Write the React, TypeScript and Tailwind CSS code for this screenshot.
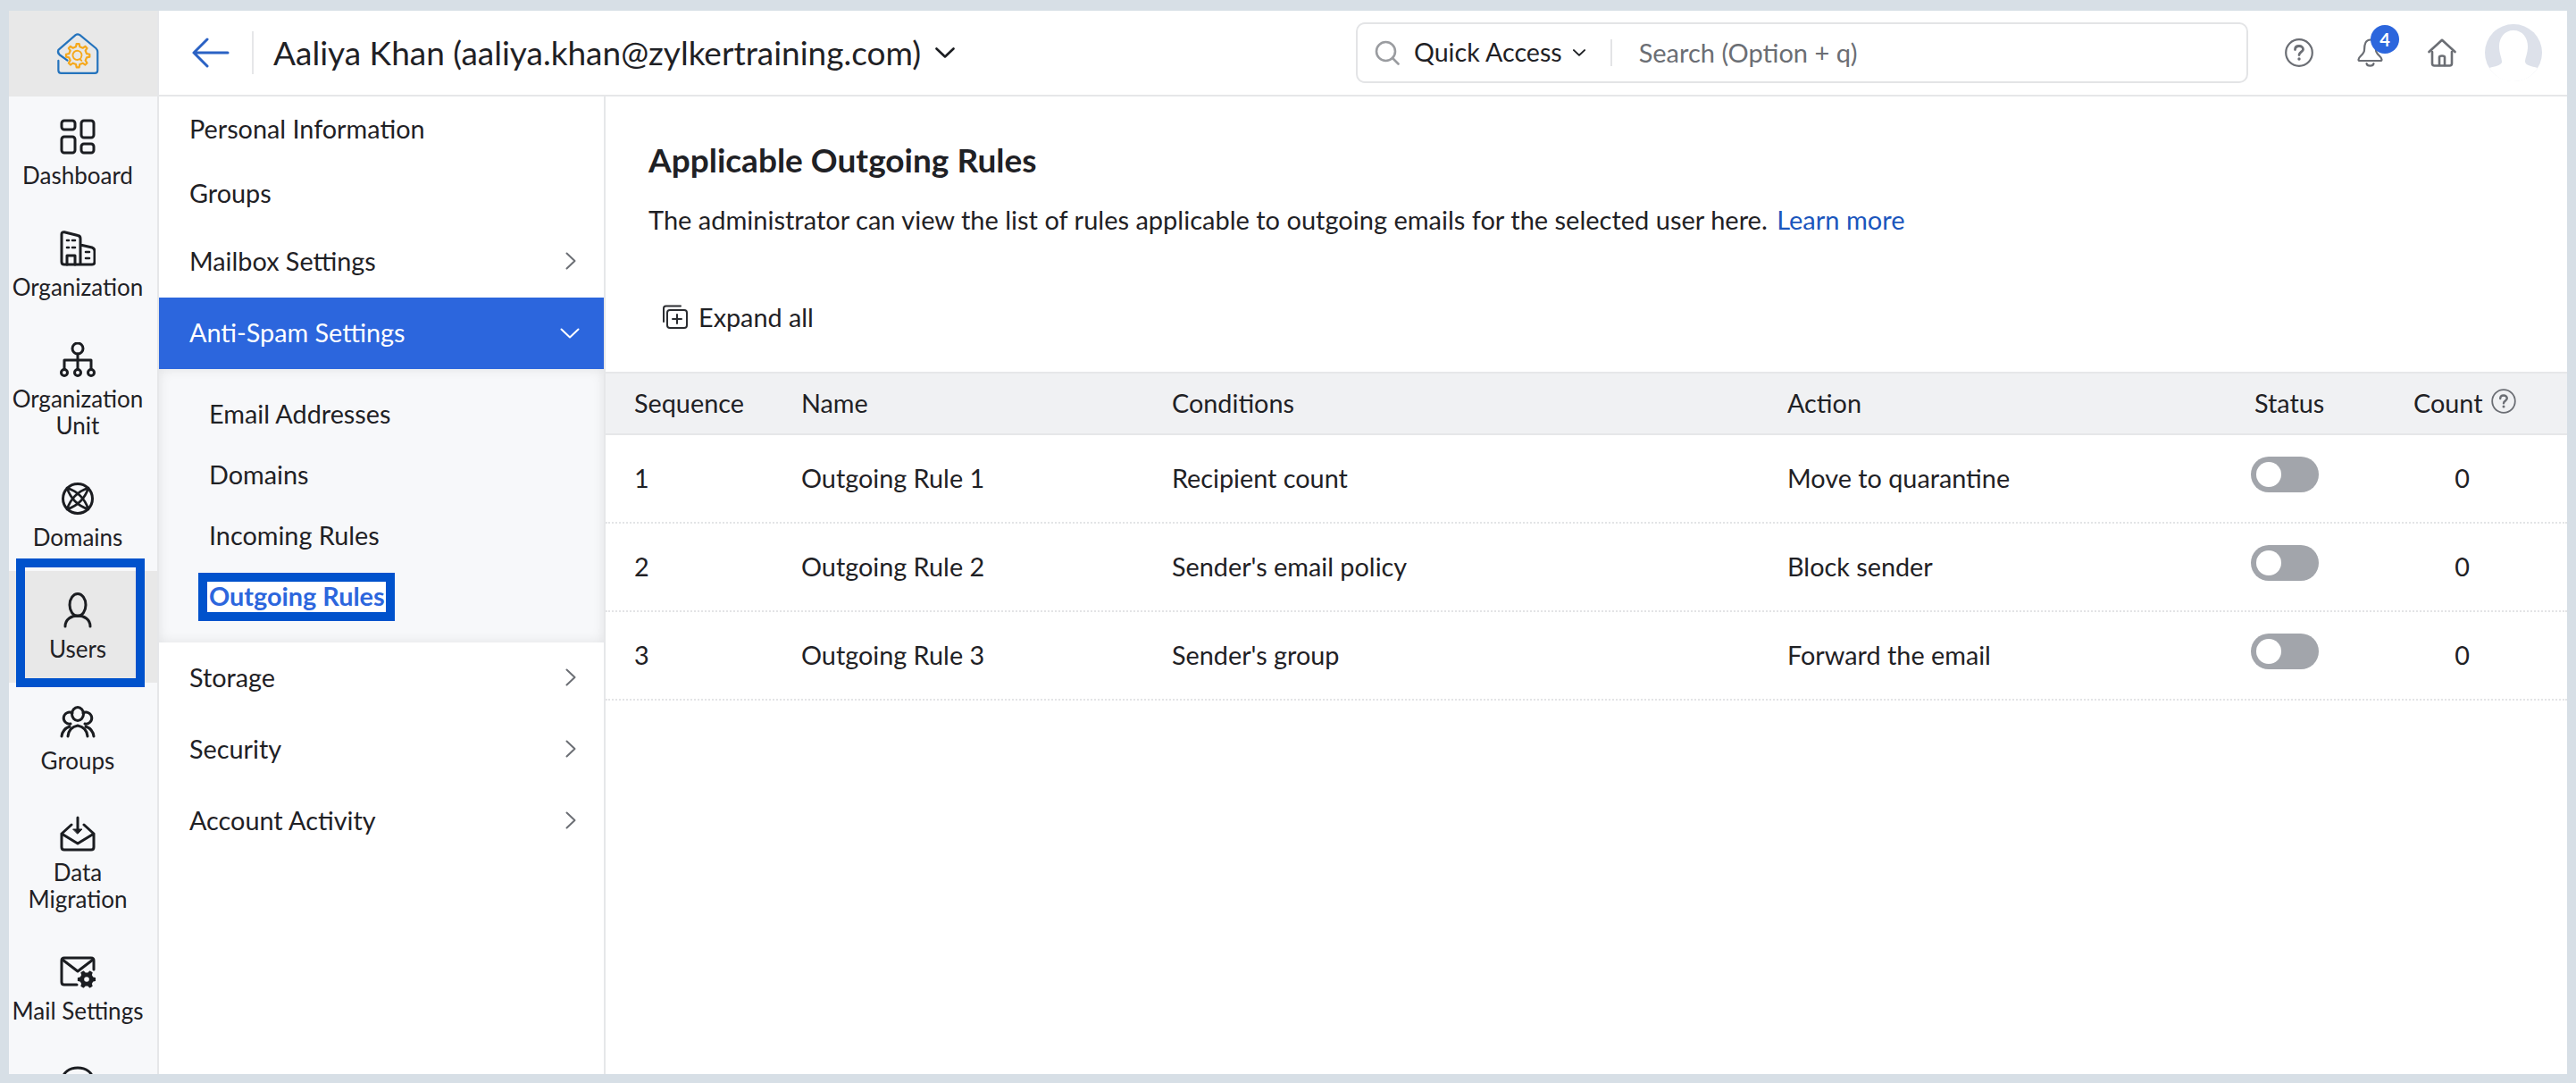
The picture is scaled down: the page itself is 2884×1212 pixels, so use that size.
import type { ReactNode } from "react"

const INK = "#1b1d21"

function gearPath(cx: number, cy: number, r1: number, r2: number, n: number) {
  let d = ""
  const step = (Math.PI * 2) / n
  for (let i = 0; i < n; i++) {
    const a = i * step
    const pts = [
      [a - step * 0.27, r1],
      [a - step * 0.14, r2],
      [a + step * 0.14, r2],
      [a + step * 0.27, r1],
    ]
    pts.forEach(([t, r]) => {
      d += `${d ? "L" : "M"}${(cx + Math.cos(t) * r).toFixed(2)} ${(cy + Math.sin(t) * r).toFixed(2)} `
    })
  }
  return d + "Z"
}

function Icon({ children, h = 40 }: { children: ReactNode; h?: number }) {
  return (
    <svg
      width="40"
      height={h}
      viewBox={`0 0 40 ${h}`}
      fill="none"
      stroke={INK}
      strokeWidth="3"
      strokeLinecap="round"
      strokeLinejoin="round"
      className="shrink-0"
    >
      {children}
    </svg>
  )
}

function Logo() {
  return (
    <svg width="50" height="48" viewBox="65 25 155 152" fill="none" strokeLinecap="round" strokeLinejoin="round">
      <path
        d="M106 125L78 105Q70 98 74 88L135 35Q142 30 150 35L207 82Q213 88 213 95V160Q213 170 203 170H84Q74 170 74 160V126"
        stroke="#2473bd"
        strokeWidth="7"
      />
      <path d={gearPath(143, 108, 32, 42, 8)} stroke="#f5a81c" strokeWidth="7" />
      <path d="M154 116A16 16 0 1 0 150 120L156 126" stroke="#f5a81c" strokeWidth="6" />
    </svg>
  )
}

const dashboardIcon = (
  <Icon>
    <rect x="2" y="2" width="15" height="10" rx="3" />
    <rect x="24" y="2" width="14" height="19" rx="3" />
    <rect x="2" y="20" width="15" height="18" rx="3" />
    <rect x="24" y="28" width="14" height="10" rx="3" />
  </Icon>
)

const organizationIcon = (
  <Icon>
    <path d="M23 38V9Q23 6 20 5.5L5 1.8Q2 1.5 2 4V35Q2 38 5 38H36Q39 38 39 35V23Q39 20 36 19L23 16" />
    <path d="M8 38V28H17V38" />
    <path d="M8 11H10M14 11H17M8 19H10M14 19H17M29 24H33M29 31H33" strokeWidth="2.6" />
  </Icon>
)

const orgUnitIcon = (
  <Icon>
    <circle cx="20" cy="7" r="6" />
    <path d="M20 13V30M5 30V20H35V30" />
    <circle cx="5" cy="34" r="3.5" />
    <circle cx="20" cy="34" r="3.5" />
    <circle cx="35" cy="34" r="3.5" />
  </Icon>
)

const domainsIcon = (
  <Icon h={36}>
    <g transform="translate(0 -2)">
      <circle cx="20" cy="20" r="16.5" />
      <path d="M8 8Q26 14 32 32M8 8Q14 26 32 32M32 8Q14 14 8 32M32 8Q26 26 8 32" strokeWidth="2.6" />
    </g>
  </Icon>
)

const usersIcon = (
  <Icon>
    <ellipse cx="20" cy="14" rx="9" ry="12.5" />
    <path d="M6 38C6 30 13 26 20 26C27 26 34 30 34 38" />
  </Icon>
)

const groupsIcon = (
  <Icon h={36}>
    <ellipse cx="20" cy="9" rx="6.5" ry="7.5" />
    <path d="M14 8A6.5 6.5 0 1 0 12 20M26 8A6.5 6.5 0 1 1 28 20" />
    <path d="M9 34Q10 24 20 22Q30 24 31 34M2 34Q3 26 11 23M38 34Q37 26 29 23" />
  </Icon>
)

const dataIcon = (
  <Icon>
    <path d="M2 20V35Q2 38 5 38H35Q38 38 38 35V20L27 10M2 20L13 10M2 20L20 31L38 20" />
    <path d="M20 2V18" />
    <path d="M15 15H25L20 20Z" fill={INK} strokeWidth="1" />
  </Icon>
)

const mailSettingsIcon = (
  <Icon h={36}>
    <path d="M19 32H5Q2 32 2 29V5Q2 2 5 2H35Q38 2 38 5V15" />
    <path d="M3 4L20 17L37 4" />
    <path d={gearPath(30, 26, 7, 9.5, 6)} fill={INK} stroke={INK} strokeWidth="1.5" />
    <circle cx="30" cy="26" r="2.8" fill="#f7f8fa" stroke="none" />
  </Icon>
)

const moreIcon = (
  <Icon>
    <path d="M3 22V16C3 7 11 2 20 2C29 2 37 7 37 16V22" />
  </Icon>
)

const sideItems = [
  { label: ["Dashboard"], icon: dashboardIcon },
  { label: ["Organization"], icon: organizationIcon },
  { label: ["Organization", "Unit"], icon: orgUnitIcon },
  { label: ["Domains"], icon: domainsIcon },
  { label: ["Users"], icon: usersIcon, active: true },
  { label: ["Groups"], icon: groupsIcon },
  { label: ["Data", "Migration"], icon: dataIcon },
  { label: ["Mail Settings"], icon: mailSettingsIcon },
]

const rules = [
  { seq: "1", name: "Outgoing Rule 1", cond: "Recipient count", action: "Move to quarantine" },
  { seq: "2", name: "Outgoing Rule 2", cond: "Sender's email policy", action: "Block sender" },
  { seq: "3", name: "Outgoing Rule 3", cond: "Sender's group", action: "Forward the email" },
]

const gridCols = "grid grid-cols-[187px_415px_689px_520px_181px_109px] pb-[2px] pl-[32px] items-center"

function ChevronRight() {
  return (
    <svg width="12" height="20" viewBox="0 0 12 20" fill="none" stroke="#6b6e74" strokeWidth="2" strokeLinecap="round" strokeLinejoin="round">
      <path d="M1.5 1.5L10.5 10L1.5 18.5" />
    </svg>
  )
}

function ChevronDown({ w, h, color, sw = 2 }: { w: number; h: number; color: string; sw?: number }) {
  return (
    <svg width={w} height={h} viewBox="0 0 22 12" fill="none" stroke={color} strokeWidth={sw} strokeLinecap="round" strokeLinejoin="round" className="shrink-0">
      <path d="M1.5 1.5L11 10.5L20.5 1.5" />
    </svg>
  )
}

function NavRow({ label }: { label: string }) {
  return (
    <div className="flex h-[80px] items-center justify-between pb-[2px] pl-[34px] pr-[31px]">
      <span>{label}</span>
      <ChevronRight />
    </div>
  )
}

function Toggle() {
  return (
    <div className="-ml-[1px] -mt-[8px] flex h-[40px] w-[76px] items-center rounded-full bg-[#a2a5ab] pl-[6px]">
      <div className="h-[28px] w-[28px] rounded-full bg-white" />
    </div>
  )
}

export default function App() {
  return (
    <div className="h-[1212px] w-[2884px] overflow-hidden bg-[#d7dfe6] px-[10px] pb-[10px] pt-[12px] font-[Lato,sans-serif] text-[#1f2125]">
      <div className="flex h-full bg-white">
        {/* icon rail */}
        <aside className="flex w-[168px] shrink-0 flex-col overflow-hidden border-r-2 border-[#e6e7e9] bg-[#f7f8fa] text-[26px] leading-[30px]">
          <div className="mb-[1px] flex h-[96px] shrink-0 items-center justify-center bg-[#e8e8e8] pr-[12px]">
            <Logo />
          </div>
          {sideItems.map((item) => (
            <div
              key={item.label.join(" ")}
              className={`relative flex shrink-0 flex-col items-center pb-[23px] pr-[12px] pt-[24px] text-center ${item.active ? "bg-[#e8e8e8]" : ""}`}
            >
              <div className="mb-[8px] flex h-[40px] items-center justify-center">{item.icon}</div>
              {item.label.map((line) => (
                <div key={line} className="whitespace-nowrap">
                  {line}
                </div>
              ))}
              {item.active && (
                <div className="absolute -top-[14px] left-[8px] h-[144px] w-[144px] border-[10px] border-[#0052cc]" />
              )}
            </div>
          ))}
          <div className="flex shrink-0 justify-center pr-[12px] pt-[24px]">{moreIcon}</div>
        </aside>

        <div className="flex min-w-0 flex-1 flex-col">
          {/* top bar */}
          <header className="flex h-[96px] shrink-0 items-center border-b-2 border-[#e6e7e9] pl-[37px] pr-[28px]">
            <svg width="42" height="34" viewBox="0 0 42 34" fill="none" stroke="#2b62c4" strokeWidth="3" strokeLinecap="round" strokeLinejoin="round" className="shrink-0">
              <path d="M40 17H2M17 2L2 17L17 32" />
            </svg>
            <div className="ml-[25px] h-[48px] w-[2px] bg-[#e6e7e9]" />
            <div className="ml-[22px] whitespace-nowrap text-[37px] leading-[44px]">Aaliya Khan (aaliya.khan@zylkertraining.com)</div>
            <div className="ml-[16px]">
              <ChevronDown w={22} h={12} color={INK} sw={2.6} />
            </div>

            <div className="ml-auto flex h-[68px] w-[999px] items-center rounded-[10px] border-2 border-[#e3e4e6] pl-[19px]">
              <svg width="28" height="28" viewBox="0 0 28 28" fill="none" stroke="#9a9ca0" strokeWidth="2.6" strokeLinecap="round" className="shrink-0">
                <circle cx="12.5" cy="12.5" r="10.5" />
                <path d="M20 20L26.5 26.5" />
              </svg>
              <span className="ml-[16px] whitespace-nowrap pb-[2px] text-[28.6px] leading-[36px]">Quick Access</span>
              <div className="ml-[12px]">
                <ChevronDown w={14} h={8} color={INK} sw={3} />
              </div>
              <div className="ml-[28px] h-[30px] w-[2px] bg-[#e3e4e6]" />
              <span className="ml-[30px] whitespace-nowrap text-[29px] leading-[36px] text-[#6b6e74]">Search (Option + q)</span>
            </div>

            {/* help */}
            <svg width="32" height="32" viewBox="0 0 32 32" fill="none" stroke="#6b6e74" strokeWidth="2.2" strokeLinecap="round" className="ml-[41px] shrink-0">
              <circle cx="16" cy="16" r="14.8" />
              <path d="M11.5 12.5C11.5 9.5 13.5 8.5 16 8.5C18.5 8.5 20.5 10 20.5 12.2C20.5 15 16 15.5 16 18.5" strokeWidth="2.8" />
              <circle cx="16" cy="23" r="1.7" fill="#6b6e74" stroke="none" />
            </svg>

            {/* bell with unread count */}
            <div className="relative ml-[49px] h-[32px] w-[29px] shrink-0">
              <svg width="29" height="32" viewBox="0 0 29 32" fill="none" stroke="#6b6e74" strokeWidth="2.2" strokeLinecap="round" strokeLinejoin="round">
                <path d="M8 13C8 6 10 1.5 14.5 1.5C19 1.5 21 6 21 13C21 18 27.5 20 27.5 23.5Q27.5 25 26 25H3Q1.5 25 1.5 23.5C1.5 20 8 18 8 13Z" />
                <path d="M10.5 28C11 31.5 18 31.5 18.5 28" />
              </svg>
              <div className="absolute -top-[15px] left-[15px] flex h-[32px] w-[32px] items-center justify-center rounded-full bg-[#2c66dd] text-[20px] font-bold leading-none text-white">
                4
              </div>
            </div>

            {/* home */}
            <svg width="32" height="32" viewBox="0 0 32 32" fill="none" stroke="#6b6e74" strokeWidth="2.6" strokeLinecap="round" strokeLinejoin="round" className="ml-[50px] shrink-0">
              <path d="M1.5 15L16 1.8L30.5 15" />
              <path d="M5 15V28Q5 30.5 7.5 30.5H24.5Q27 30.5 27 28V15" />
              <path d="M13 30V21Q13 19.5 16 19.5Q19 19.5 19 21V30" />
            </svg>

            {/* avatar */}
            <svg width="64" height="64" viewBox="0 0 64 64" className="ml-[32px] shrink-0">
              <circle cx="32" cy="32" r="32" fill="#dde1ea" />
              <path
                d="M32 7C42 7 48 15 48 25C48 33 45 38 45 42C45 46 52 47 59 49C53 59 43 64 32 64C21 64 11 59 5 49C12 47 19 46 19 42C19 38 16 33 16 25C16 15 22 7 32 7Z"
                fill="#ffffff"
              />
            </svg>
          </header>

          <div className="flex min-h-0 flex-1">
            {/* settings menu */}
            <nav className="w-[500px] shrink-0 border-r-2 border-[#e6e7e9] pt-[1px] text-[28.8px] leading-[36px]">
              <div className="flex h-[72px] items-center pb-[2px] pl-[34px]">Personal Information</div>
              <div className="flex h-[72px] items-center pb-[2px] pl-[34px]">Groups</div>
              <NavRow label="Mailbox Settings" />
              <div className="flex h-[80px] items-center justify-between bg-[#2c66dd] pl-[34px] pr-[27px] text-white">
                <span className="pb-[2px]">Anti-Spam Settings</span>
                <ChevronDown w={22} h={12} color="#ffffff" />
              </div>
              <div className="bg-[#f7f8fa] py-[17px] pl-[56px] shadow-[inset_0_0_14px_rgba(0,0,0,0.09)]">
                <div className="flex h-[68px] items-center pb-[2px]">Email Addresses</div>
                <div className="flex h-[68px] items-center pb-[2px]">Domains</div>
                <div className="flex h-[68px] items-center pb-[2px]">Incoming Rules</div>
                <div className="flex h-[68px] items-center">
                  <span className="-ml-[12px] flex h-[54px] items-center border-[10px] border-[#0052cc] bg-white pb-[2px] pl-[2px] pr-[1px] font-bold text-[#2c66dd]">
                    Outgoing Rules
                  </span>
                </div>
              </div>
              <NavRow label="Storage" />
              <NavRow label="Security" />
              <NavRow label="Account Activity" />
            </nav>

            {/* rules */}
            <main className="min-w-0 flex-1 text-[28.8px] leading-[36px]">
              <h1 className="pl-[48px] pt-[49px] text-[37px] font-bold leading-[44px]">Applicable Outgoing Rules</h1>
              <p className="mt-[25px] pl-[48px] text-[29px] leading-[40px]">
                The administrator can view the list of rules applicable to outgoing emails for the selected user here.{" "}
                <span className="ml-[3px] text-[#1a56bd]">Learn more</span>
              </p>
              <div className="mt-[69px] flex h-[40px] items-center pl-[63px]">
                <svg width="30" height="28" viewBox="0 0 30 28" fill="none" stroke="#2a2c30" strokeWidth="2" strokeLinecap="round" strokeLinejoin="round" className="shrink-0">
                  <path d="M2 19V4Q2 1.5 4.5 1.5H21" />
                  <rect x="6" y="6" width="22" height="20" rx="3" />
                  <path d="M17 11V21M12 16H22" />
                </svg>
                <span className="ml-[11px]">Expand all</span>
              </div>

              <div className={`${gridCols} mt-[41px] h-[71px] border-y-2 border-[#e6e7e9] bg-[#f0f1f3]`}>
                <div>Sequence</div>
                <div>Name</div>
                <div>Conditions</div>
                <div>Action</div>
                <div className="pl-[3px]">Status</div>
                <div className="flex items-center whitespace-nowrap">
                  Count
                  <svg width="28" height="28" viewBox="0 0 28 28" fill="none" stroke="#6b6e74" strokeWidth="1.8" strokeLinecap="round" className="ml-[9px] -mt-[4px] shrink-0">
                    <circle cx="14" cy="14" r="12.8" />
                    <path d="M10.2 11C10.2 8.5 12 7.5 14 7.5C16 7.5 17.8 8.8 17.8 10.8C17.8 13.3 14 13.6 14 16.2" strokeWidth="2.4" />
                    <circle cx="14" cy="20" r="1.5" fill="#6b6e74" stroke="none" />
                  </svg>
                </div>
              </div>

              {rules.map((rule) => (
                <div key={rule.seq} className={`${gridCols} h-[99px] border-b-2 border-dotted border-[#e3e4e6]`}>
                  <div>{rule.seq}</div>
                  <div>{rule.name}</div>
                  <div>{rule.cond}</div>
                  <div>{rule.action}</div>
                  <Toggle />
                  <div className="text-center">0</div>
                </div>
              ))}
            </main>
          </div>
        </div>
      </div>
    </div>
  )
}
